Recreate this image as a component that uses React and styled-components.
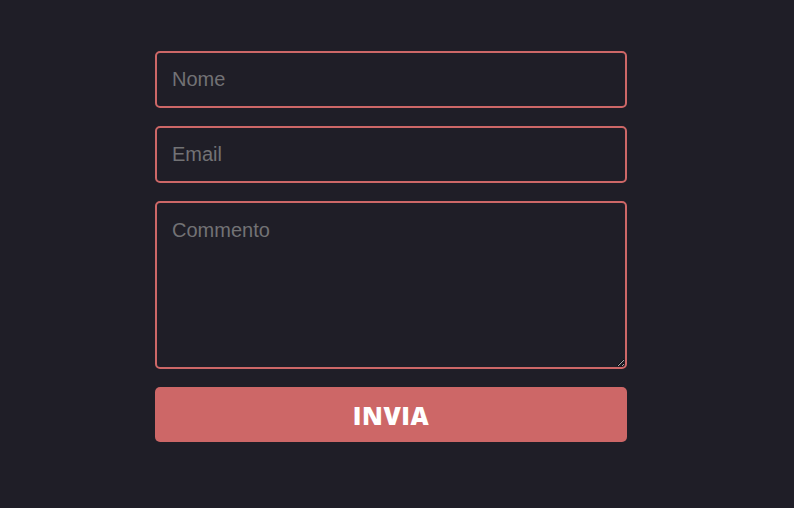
import React from "react";
import styled, { createGlobalStyle } from "styled-components";

const GlobalStyle = createGlobalStyle`
  html, body {
    margin: 0;
    padding: 0;
    background-color: #1f1e27;
    font-family: "Liberation Sans", Arial, sans-serif;
  }
  * {
    box-sizing: border-box;
  }
`;

const Page = styled.div`
  min-height: 508px;
  padding: 51px 0 0 155px;
`;

const Form = styled.form`
  width: 472px;
  display: flex;
  flex-direction: column;
  gap: 18px;
`;

const Field = styled.input`
  height: 57px;
  width: 100%;
  padding: 0 15px;
  border: 2px solid #cd6767;
  border-radius: 5px;
  background-color: #1f1e27;
  color: #ddd;
  font-family: "Liberation Sans", Arial, sans-serif;
  font-size: 20px;
  outline: none;
  &::placeholder {
    color: #727275;
  }
`;

const TextArea = styled.textarea`
  height: 168px;
  width: 100%;
  padding: 14px 15px;
  border: 2px solid #cd6767;
  border-radius: 5px;
  background-color: #1f1e27;
  color: #ddd;
  font-family: "Liberation Sans", Arial, sans-serif;
  font-size: 20px;
  line-height: 26px;
  outline: none;
  resize: vertical;
  &::placeholder {
    color: #727275;
  }
`;

const Submit = styled.button`
  height: 55px;
  width: 100%;
  border: none;
  border-radius: 5px;
  background-color: #cd6767;
  color: #ffffff;
  font-family: "Open Sans", "Liberation Sans", sans-serif;
  font-weight: 800;
  font-size: 25px;
  letter-spacing: 0.5px;
  cursor: pointer;
`;

const App = () => {
  return (
    <Page>
      <GlobalStyle />
      <Form onSubmit={(e) => e.preventDefault()}>
        <Field type="text" placeholder="Nome" />
        <Field type="email" placeholder="Email" />
        <TextArea placeholder="Commento" />
        <Submit type="submit">INVIA</Submit>
      </Form>
    </Page>
  );
};

export default App;
